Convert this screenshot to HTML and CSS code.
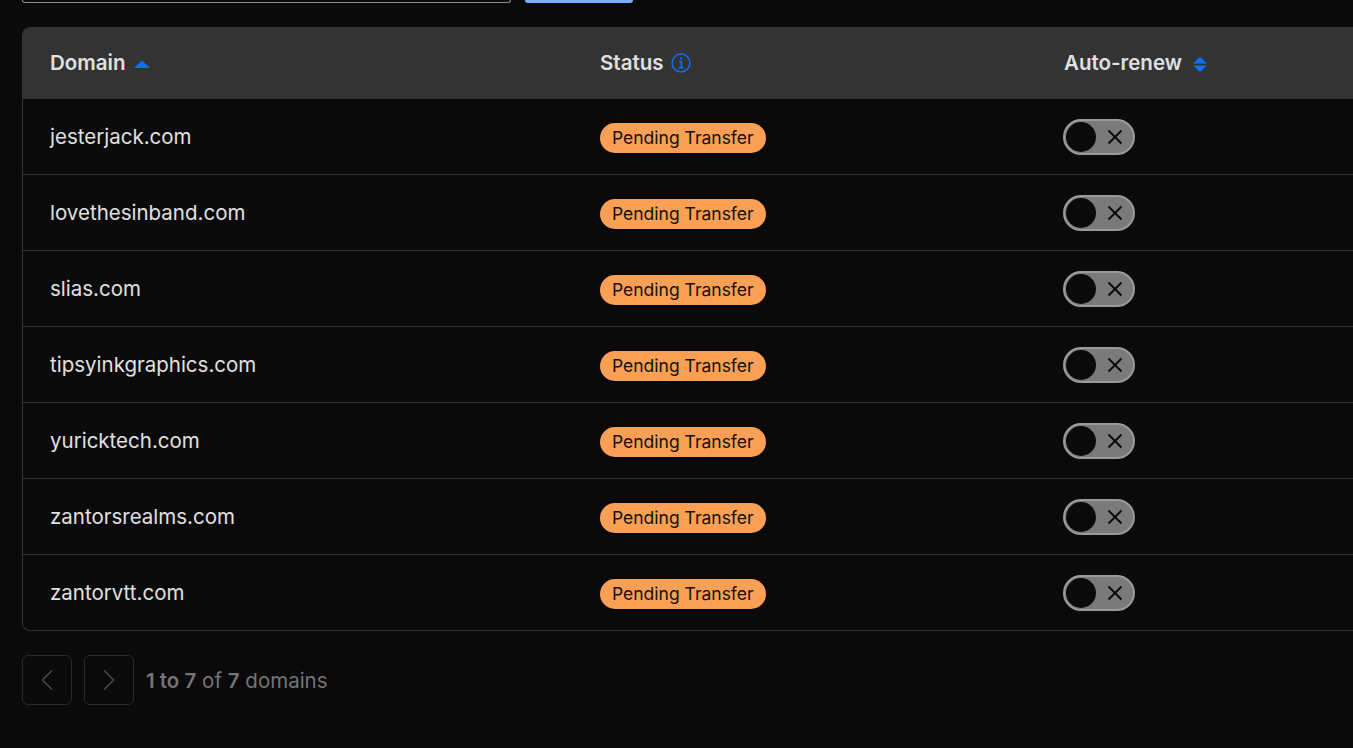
FILE: index.html
```html
<!DOCTYPE html>
<html>
<head>
    <title>Domains</title>
    <link rel="stylesheet" href="styles.css">
</head>
<body>
    <div class="toolbar">
        <div class="search"></div>
        <div class="primary"></div>
    </div>

    <div class="table-wrap">
        <div class="row head">
            <div class="col-domain">Domain
                <svg class="sort" width="16" height="8" viewBox="0 0 16 8"><path d="M0 8 L8 0.5 L16 8 Z" fill="#0f6fff"/></svg>
            </div>
            <div class="col-status">Status
                <svg class="info" width="20" height="20" viewBox="0 0 20 20" fill="none" stroke="#0f6fff">
                    <circle cx="10" cy="10" r="9" stroke-width="1.4"/>
                    <path d="M8 8.6 H10.4 V14.6 M7.8 14.8 H12.4" stroke-width="1.4"/>
                    <circle cx="10" cy="5.6" r="1.1" fill="#0f6fff" stroke="none"/>
                </svg>
            </div>
            <div class="col-renew">Auto-renew
                <svg class="sort-both" width="14" height="15" viewBox="0 0 14 15"><path d="M0 6.5 L7 0 L14 6.5 Z M0 8.5 L7 15 L14 8.5 Z" fill="#0f6fff"/></svg>
            </div>
        </div>

        <div class="row">
            <div class="col-domain">jesterjack.com</div>
            <div class="col-status"><span class="badge">Pending Transfer</span></div>
            <div class="col-renew"><span class="toggle"><span class="knob"></span><svg class="x" width="16" height="16" viewBox="0 0 16 16"><path d="M1.5 1.5 L14.5 14.5 M14.5 1.5 L1.5 14.5" stroke="#0a0a0b" stroke-width="2"/></svg></span></div>
        </div>
        <div class="row">
            <div class="col-domain">lovethesinband.com</div>
            <div class="col-status"><span class="badge">Pending Transfer</span></div>
            <div class="col-renew"><span class="toggle"><span class="knob"></span><svg class="x" width="16" height="16" viewBox="0 0 16 16"><path d="M1.5 1.5 L14.5 14.5 M14.5 1.5 L1.5 14.5" stroke="#0a0a0b" stroke-width="2"/></svg></span></div>
        </div>
        <div class="row">
            <div class="col-domain">slias.com</div>
            <div class="col-status"><span class="badge">Pending Transfer</span></div>
            <div class="col-renew"><span class="toggle"><span class="knob"></span><svg class="x" width="16" height="16" viewBox="0 0 16 16"><path d="M1.5 1.5 L14.5 14.5 M14.5 1.5 L1.5 14.5" stroke="#0a0a0b" stroke-width="2"/></svg></span></div>
        </div>
        <div class="row">
            <div class="col-domain">tipsyinkgraphics.com</div>
            <div class="col-status"><span class="badge">Pending Transfer</span></div>
            <div class="col-renew"><span class="toggle"><span class="knob"></span><svg class="x" width="16" height="16" viewBox="0 0 16 16"><path d="M1.5 1.5 L14.5 14.5 M14.5 1.5 L1.5 14.5" stroke="#0a0a0b" stroke-width="2"/></svg></span></div>
        </div>
        <div class="row">
            <div class="col-domain">yuricktech.com</div>
            <div class="col-status"><span class="badge">Pending Transfer</span></div>
            <div class="col-renew"><span class="toggle"><span class="knob"></span><svg class="x" width="16" height="16" viewBox="0 0 16 16"><path d="M1.5 1.5 L14.5 14.5 M14.5 1.5 L1.5 14.5" stroke="#0a0a0b" stroke-width="2"/></svg></span></div>
        </div>
        <div class="row">
            <div class="col-domain">zantorsrealms.com</div>
            <div class="col-status"><span class="badge">Pending Transfer</span></div>
            <div class="col-renew"><span class="toggle"><span class="knob"></span><svg class="x" width="16" height="16" viewBox="0 0 16 16"><path d="M1.5 1.5 L14.5 14.5 M14.5 1.5 L1.5 14.5" stroke="#0a0a0b" stroke-width="2"/></svg></span></div>
        </div>
        <div class="row">
            <div class="col-domain">zantorvtt.com</div>
            <div class="col-status"><span class="badge">Pending Transfer</span></div>
            <div class="col-renew"><span class="toggle"><span class="knob"></span><svg class="x" width="16" height="16" viewBox="0 0 16 16"><path d="M1.5 1.5 L14.5 14.5 M14.5 1.5 L1.5 14.5" stroke="#0a0a0b" stroke-width="2"/></svg></span></div>
        </div>
    </div>

    <div class="pager">
        <button class="page-btn"><svg width="14" height="22" viewBox="0 0 14 22" fill="none" stroke="#4a4a4b" stroke-width="1.5"><path d="M12 1.5 L2.5 11 L12 20.5"/></svg></button>
        <button class="page-btn"><svg width="14" height="22" viewBox="0 0 14 22" fill="none" stroke="#4a4a4b" stroke-width="1.5"><path d="M2 1.5 L11.5 11 L2 20.5"/></svg></button>
        <div class="page-info"><strong>1 to 7</strong> of <strong>7</strong> domains</div>
    </div>
</body>
</html>
```

FILE: styles.css
```css
:root {
    --bg-color: #0a0a0b;
    --head-bg: #333333;
    --text-color: #e0e0e0;
    --line-color: #333333;
    --blue: #0f6fff;
}

html, body {
    height: 100%;
}

body {
    margin: 0;
    padding: 0 0 0 22px;
    box-sizing: border-box;
    background: var(--bg-color);
    color: var(--text-color);
    font-family: Inter, "Noto Sans", sans-serif;
    overflow: hidden;
}

.toolbar {
    display: flex;
    gap: 14px;
    height: 3px;
    margin-bottom: 24px;
}

.search {
    width: 489px;
    box-sizing: border-box;
    border: 1px solid #8a8a8a;
    border-top: none;
    border-radius: 0 0 6px 6px;
}

.primary {
    width: 108px;
    background: #7eaefc;
    border-radius: 0 0 6px 6px;
}

.table-wrap {
    width: 1331px;
    box-sizing: border-box;
    border: 1px solid var(--line-color);
    border-right: none;
    border-radius: 8px 0 0 8px;
    overflow: hidden;
}

.row {
    display: flex;
    align-items: center;
    height: 76px;
    box-sizing: border-box;
    border-top: 1px solid var(--line-color);
    font-size: 20.5px;
}

.row.head {
    height: 71px;
    margin-top: -1px;
    border-top: none;
    background: var(--head-bg);
    font-weight: 600;
}

.col-domain {
    width: 550px;
    padding-left: 27px;
    display: flex;
    align-items: center;
    flex: none;
}

.col-status {
    width: 464px;
    display: flex;
    align-items: center;
    flex: none;
}

.col-renew {
    display: flex;
    align-items: center;
}

.sort {
    margin-left: 9px;
    margin-top: 3px;
}

.info {
    margin-left: 7px;
}

.sort-both {
    margin-left: 11px;
    margin-top: 3px;
}

.badge {
    display: inline-block;
    margin-top: 2px;
    padding: 0 12px;
    height: 30px;
    line-height: 30px;
    border-radius: 15px;
    background: #f9a055;
    color: #111111;
    font-size: 17.5px;
}

.toggle {
    position: relative;
    display: block;
    width: 72px;
    height: 36px;
    margin-left: -1px;
    box-sizing: border-box;
    border: 2px solid #9a9a9a;
    border-radius: 18px;
    background: #7a7a7a;
}

.knob {
    position: absolute;
    left: 1px;
    top: 1px;
    width: 30px;
    height: 30px;
    border-radius: 50%;
    background: var(--bg-color);
}

.x {
    position: absolute;
    left: 41.5px;
    top: 8px;
}

.pager {
    display: flex;
    align-items: center;
    gap: 12px;
    margin-top: 24px;
}

.page-btn {
    width: 50px;
    height: 50px;
    padding: 0;
    display: flex;
    align-items: center;
    justify-content: center;
    background: transparent;
    border: 1px solid #2a2a2b;
    border-radius: 6px;
}

.page-info {
    font-size: 20.5px;
    color: #747474;
}

.page-info strong {
    font-weight: 600;
}
```
